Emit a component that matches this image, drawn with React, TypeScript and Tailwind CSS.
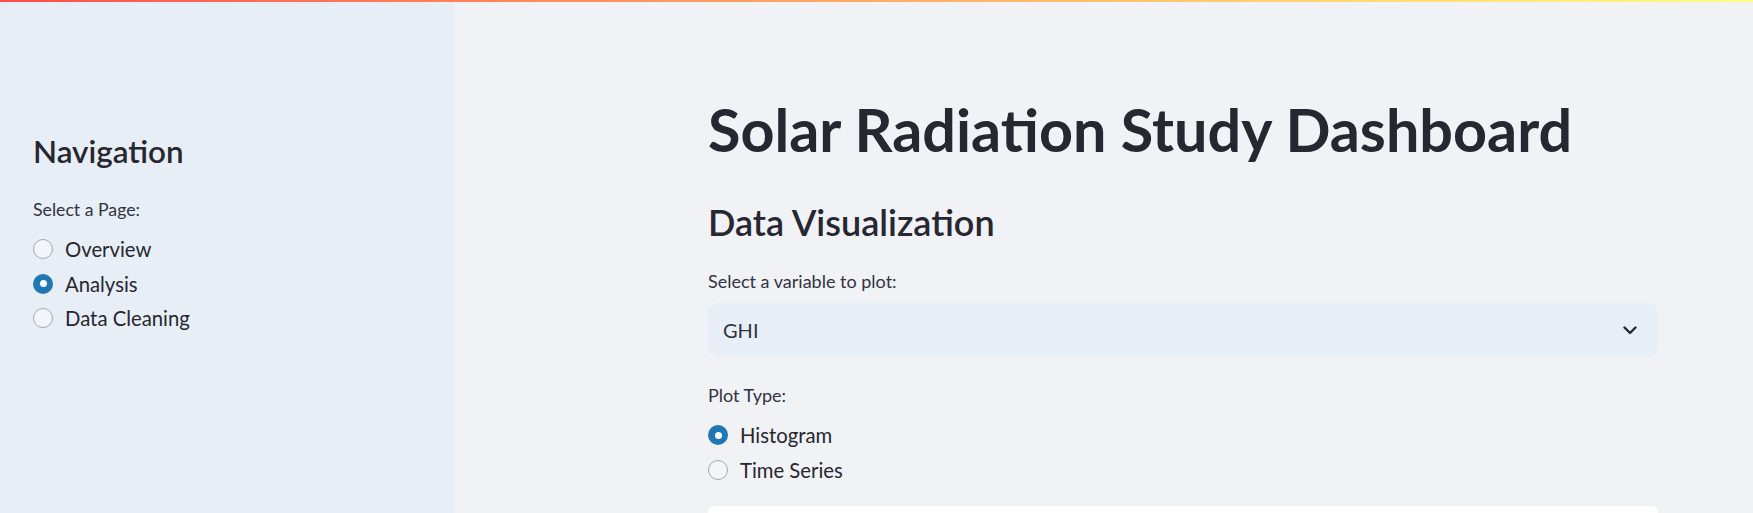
import React from "react";

function Radio({ label, checked }: { label: string; checked?: boolean }) {
  return (
    <div className="flex h-[34.5px] items-center">
      {checked ? (
        <span className="flex h-[20px] w-[20px] items-center justify-center rounded-full bg-[#1f77b4]">
          <span className="h-[7px] w-[7px] rounded-full bg-white" />
        </span>
      ) : (
        <span className="h-[20px] w-[20px] rounded-full border-[1.5px] border-[#a3a8b4] bg-[#f3f5f9]" />
      )}
      <span className="ml-[12px] text-[20.3px] leading-[24px] text-[#262730]">{label}</span>
    </div>
  );
}

export default function App() {
  return (
    <div
      className="relative flex h-[513px] w-full overflow-hidden"
      style={{ fontFamily: "Lato, 'Noto Sans', sans-serif" }}
    >
      <div className="absolute left-0 right-0 top-0 h-[2px] bg-gradient-to-r from-[#ff4b4b] to-[#fffd80]" />
      <aside className="w-[454px] shrink-0 bg-[#e8eef6] pl-[33px] pt-[133px]">
        <h2 className="text-[31.4px] font-semibold leading-[36px] text-[#262730]">Navigation</h2>
        <div className="mt-[31px] text-[17.7px] leading-[20px] text-[#31333f]">Select a Page:</div>
        <div className="mt-[12px] flex flex-col">
          <Radio label="Overview" />
          <Radio label="Analysis" checked />
          <Radio label="Data Cleaning" />
        </div>
      </aside>
      <main className="flex-1 bg-[#f0f2f6] pl-[254px] pt-[94px]">
        <div className="w-[950px]">
          <h1 className="text-[59.3px] font-bold leading-[71px] text-[#262730]">
            Solar Radiation Study Dashboard
          </h1>
          <h2 className="mt-[36px] text-[36px] font-semibold leading-[43px] text-[#262730]">
            Data Visualization
          </h2>
          <div className="mt-[26px] text-[18px] leading-[22px] text-[#31333f]">
            Select a variable to plot:
          </div>
          <div className="mt-[11px] flex h-[54px] items-center justify-between rounded-[10px] bg-[#e8eef6] pl-[15px] pr-[21px]">
            <span className="text-[20px] leading-[24px] text-[#31333f]">GHI</span>
            <svg width="14" height="9" viewBox="0 0 14 9" fill="none">
              <path d="M1.5 1.5 L7 7 L12.5 1.5" stroke="#262730" strokeWidth="2.4" strokeLinecap="round" strokeLinejoin="round" />
            </svg>
          </div>
          <div className="mt-[27px] text-[18px] leading-[22px] text-[#31333f]">Plot Type:</div>
          <div className="mt-[12px] flex flex-col">
            <Radio label="Histogram" checked />
            <Radio label="Time Series" />
          </div>
          <div className="mt-[19px] h-[300px] rounded-[6px] bg-white" />
        </div>
      </main>
    </div>
  );
}
